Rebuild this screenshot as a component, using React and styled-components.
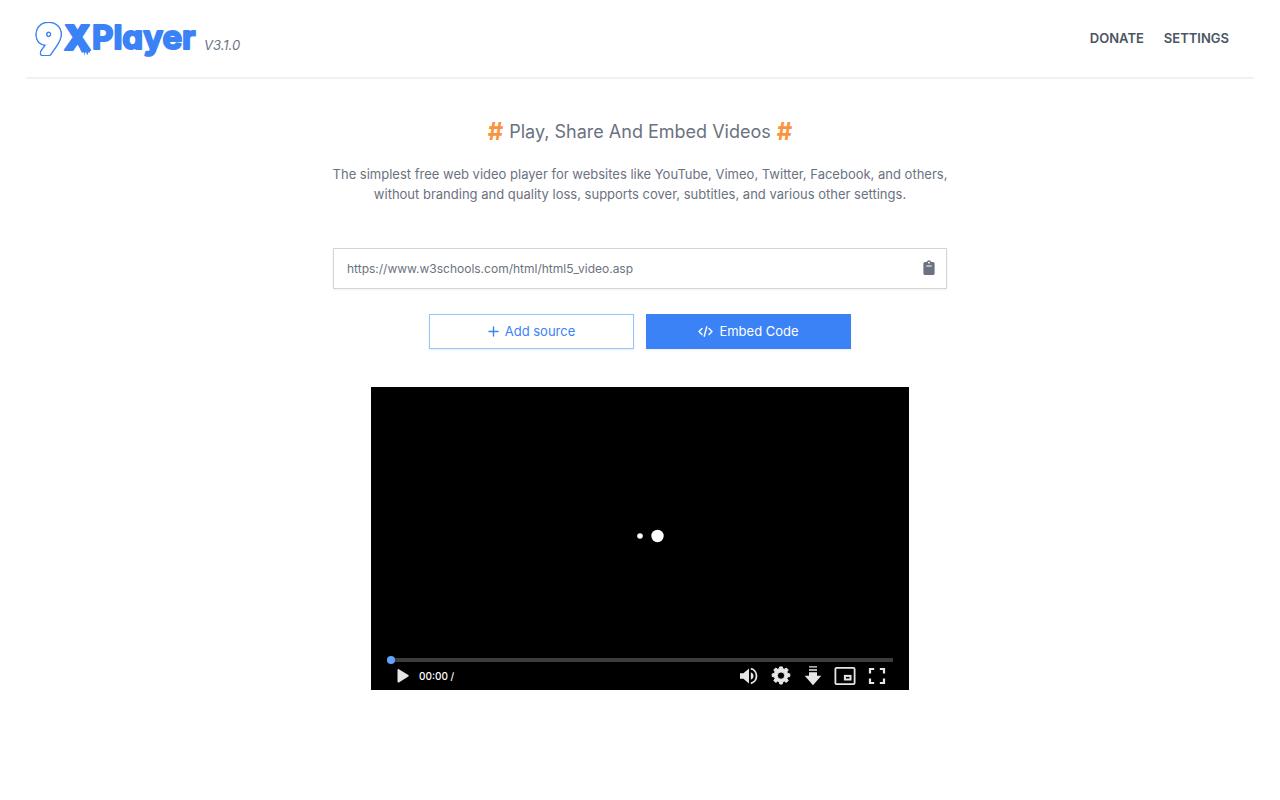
import { useState } from "react";
import styled, { createGlobalStyle } from "styled-components";

const App = () => {
  const [url, setUrl] = useState("https://www.w3schools.com/html/html5_video.asp");

  return (
    <>
      <GlobalStyle />
      <Header>
        <Brand>
          <Logo />
          <Version>V3.1.0</Version>
        </Brand>
        <Nav>
          <NavLink href="#donate">DONATE</NavLink>
          <NavLink href="#settings">SETTINGS</NavLink>
        </Nav>
      </Header>
      <Main>
        <Title>
          <Hash>#</Hash> Play, Share And Embed Videos <Hash>#</Hash>
        </Title>
        <Description>
          The simplest free web video player for websites like YouTube, Vimeo,
          Twitter, Facebook, and others,
          <br />
          without branding and quality loss, supports cover, subtitles, and
          various other settings.
        </Description>
        <UrlBox>
          <UrlInput
            type="text"
            aria-label="Video URL"
            value={url}
            onChange={(e) => setUrl(e.target.value)}
          />
          <PasteButton type="button" aria-label="Paste">
            <svg width="12" height="16" viewBox="0 0 12 16" fill="currentColor">
              <path
                fillRule="evenodd"
                d="M2 2h1.700a2.400 2.400 0 0 1 4.600 0H10a1.600 1.600 0 0 1 1.600 1.600v9.800A1.600 1.600 0 0 1 10 15H2a1.600 1.600 0 0 1-1.600-1.600V3.600A1.600 1.600 0 0 1 2 2Zm4-.2a.9.9 0 1 0 0 1.800a.9.9 0 0 0 0-1.800ZM3.300 5.400v1.200h5.400V5.400Z"
              />
            </svg>
          </PasteButton>
        </UrlBox>
        <Actions>
          <ActionButton type="button">
            <svg width="11" height="11" viewBox="0 0 11 11" {...line}>
              <path d="M5.500 1v9M1 5.500h9" />
            </svg>
            Add source
          </ActionButton>
          <ActionButton type="button" $primary>
            <svg width="15" height="11" viewBox="0 0 15 11" {...line}>
              <path d="M4 2.500 1 5.500l3 3M11 2.500l3 3-3 3M8.800.8 6.200 10.200" />
            </svg>
            Embed Code
          </ActionButton>
        </Actions>
        <Player>
          <Stage>
            <Loader width="54" height="14" viewBox="0 0 54 14" fill="#fff">
              <circle cx="27" cy="7" r="2.800" />
              <circle cx="44.500" cy="7" r="6.200" />
            </Loader>
          </Stage>
          <Seek>
            <Thumb />
          </Seek>
          <Controls>
            <IconButton type="button" aria-label="Play">
              <svg width="22" height="22" viewBox="0 0 22 22" fill="currentColor">
                <path d="M6.500 5c0-.9.7-1.200 1.400-.8l9.400 5.900c.6.4.6 1 0 1.400l-9.400 5.900c-.7.4-1.400.1-1.400-.8Z" />
              </svg>
            </IconButton>
            <Time>00:00 /</Time>
            <IconButton type="button" aria-label="Volume">
              <svg width="22" height="22" viewBox="0 0 22 22" fill="currentColor">
                <path d="M2 8.200h3.400L11 3.600v14.800L5.400 13.800H2Z" />
                <path d="M12.800 7.300c1.700.7 2.700 2.100 2.700 3.700s-1 3-2.700 3.700Z" />
                <path
                  d="M12.800 3.700c3.300.7 5.700 3.700 5.700 7.300s-2.400 6.600-5.700 7.300"
                  fill="none"
                  stroke="currentColor"
                  strokeWidth="1.800"
                />
              </svg>
            </IconButton>
            <IconButton type="button" aria-label="Player settings">
              <svg width="22" height="22" viewBox="0 0 22 22" fill="currentColor">
                <path
                  d="M9.700 1.900h2.600l.5 1.800 1.500.6 2-1.300 1.900 1.900-1.300 2 .6 1.500 2.300.5v2.600l-2.300.5-.6 1.500 1.300 2-1.900 1.900-2-1.300-1.500.6-.5 2.300H9.700l-.5-2.300-1.500-.6-2 1.300-1.900-1.900 1.300-2-.6-1.500-2.300-.5V8.900l2.300-.5.6-1.500-1.300-2L5.700 3l2 1.300 1.500-.6ZM11 6.900a3.700 3.700 0 1 0 0 7.400 3.700 3.700 0 0 0 0-7.400Z"
                  fillRule="evenodd"
                  stroke="currentColor"
                  strokeWidth="1"
                  strokeLinejoin="round"
                />
              </svg>
            </IconButton>
            <IconButton type="button" aria-label="Download">
              <svg width="22" height="22" viewBox="0 0 22 22" fill="currentColor">
                <path d="M7 1.200h8v1.300H7ZM7 4.200h8v1.500H7ZM7 7.200h8v3.600h4.300L11 20.300 2.700 10.800H7Z" />
              </svg>
            </IconButton>
            <IconButton type="button" aria-label="Picture in picture">
              <svg width="22" height="22" viewBox="0 0 22 22" fill="none" stroke="currentColor" strokeWidth="1.800">
                <rect x="1.400" y="2.900" width="19.200" height="16.200" rx="1.200" />
                <rect x="10.900" y="10.900" width="5.600" height="3.600" strokeWidth="2" />
              </svg>
            </IconButton>
            <IconButton type="button" aria-label="Fullscreen">
              <svg width="22" height="22" viewBox="0 0 22 22" fill="none" stroke="currentColor" strokeWidth="2.200">
                <path d="M4 8.500V4h4.200M13.800 4H18v4.500M18 13.500V18h-4.200M8.200 18H4v-4.500" />
              </svg>
            </IconButton>
          </Controls>
        </Player>
      </Main>
    </>
  );
};

export default App;

const line = {
  fill: "none",
  stroke: "currentColor",
  strokeWidth: 1.4,
  strokeLinecap: "round",
  strokeLinejoin: "round",
};

const Logo = () => (
  <LogoSvg width="166" height="42" viewBox="0 0 166 42" aria-label="9XPlayer">
    <LogoNine x="3" y="36">9</LogoNine>
    <LogoText x="30" y="33" $size={34} $weight={900}>X</LogoText>
    {/* paint drips under the X */}
    <path
      d="M46 32h10v3l-1 1-1-1v2l-1 1-1-3-1 1v3l-1-3-1-1-1 1-1-2Z"
      fill="#3b82f6"
    />
    <LogoText x="58" y="32" $size={33} $weight={700}>Player</LogoText>
  </LogoSvg>
);

const GlobalStyle = createGlobalStyle`
  * {
    box-sizing: border-box;
  }
  body {
    margin: 0;
    background: #fff;
    color: #6b7280;
    font-family: Inter, "Liberation Sans", sans-serif;
    font-size: 13px;
  }
  button, input {
    font: inherit;
  }
  svg {
    display: block;
  }
`;

const Header = styled.header`
  display: flex;
  justify-content: space-between;
  align-items: center;
  height: 79px;
  margin: 0 26px;
  padding: 0 25px 1px 8px;
  border-bottom: 2px solid #f0f1f3;
`;
const Brand = styled.div`
  display: flex;
  align-items: center;
  gap: 4px;
`;
const LogoSvg = styled.svg`
  overflow: visible;
`;
const LogoText = styled.text`
  font-family: Inter, sans-serif;
  font-size: ${(props) => props.$size}px;
  font-weight: ${(props) => props.$weight};
  font-feature-settings: "cv11";
  fill: #3b82f6;
  stroke: #3b82f6;
  stroke-width: 2px;
  stroke-linejoin: round;
`;
// fat white digit with a thin blue edge built from shadows
const LogoNine = styled.text`
  font-family: Inter, sans-serif;
  font-size: 38px;
  font-weight: 700;
  font-feature-settings: "cv04";
  fill: #fff;
  stroke: #fff;
  stroke-width: 4px;
  stroke-linejoin: round;
  filter: drop-shadow(1px 0 0 #3b82f6) drop-shadow(-1px 0 0 #3b82f6)
    drop-shadow(0 1px 0 #3b82f6) drop-shadow(0 -1px 0 #3b82f6);
`;
const Version = styled.span`
  padding-top: 14px;
  font-style: italic;
`;
const Nav = styled.nav`
  display: flex;
  gap: 20px;
`;
const NavLink = styled.a`
  color: #4b5563;
  font-weight: 600;
  text-decoration: none;
`;
const Main = styled.main`
  display: flex;
  flex-direction: column;
  align-items: center;
  padding: 40px 26px;
`;
const Title = styled.h1`
  display: flex;
  align-items: center;
  gap: 6px;
  margin: 0;
  font-size: 18px;
  font-weight: 400;
  line-height: 26px;
`;
const Hash = styled.span`
  color: #fb923c;
  font-size: 24px;
  font-weight: 700;
`;
const Description = styled.p`
  margin: 19px 0 44px;
  line-height: 20px;
  text-align: center;
`;
const UrlBox = styled.div`
  display: flex;
  align-items: center;
  width: 100%;
  max-width: 614px;
  height: 41px;
  padding: 0 11px 0 13px;
  border: 1px solid #d1d5db;
  box-shadow: 0 1px 2px rgba(0, 0, 0, 0.05);
`;
const UrlInput = styled.input`
  flex: 1;
  min-width: 0;
  padding: 0;
  border: 0;
  outline: 0;
  background: transparent;
  color: #6b7280;
  font-size: 12px;
`;
const PasteButton = styled.button`
  padding: 0 0 2px;
  border: 0;
  background: none;
  color: #6b7280;
`;
const Actions = styled.div`
  display: grid;
  grid-template-columns: 1fr 1fr;
  gap: 12px;
  width: 100%;
  max-width: 422px;
  margin: 25px 0 38px;
`;
const ActionButton = styled.button`
  display: flex;
  align-items: center;
  justify-content: center;
  gap: 6px;
  height: 35px;
  padding: 0 0 1px;
  border: 1px solid ${(props) => (props.$primary ? "#3b82f6" : "#93c5fd")};
  background: ${(props) => (props.$primary ? "#3b82f6" : "#fff")};
  color: ${(props) => (props.$primary ? "#fff" : "#3b82f6")};
  box-shadow: 0 1px 2px rgba(0, 0, 0, 0.08);
`;
const Player = styled.section`
  display: flex;
  flex-direction: column;
  width: 100%;
  max-width: 538px;
  aspect-ratio: 16 / 9;
  padding: 0 16px;
  background: #000;
`;
const Stage = styled.div`
  display: flex;
  flex: 1;
  align-items: center;
  justify-content: center;
  padding-top: 28px;
`;
const Loader = styled.svg`
  flex: none;
`;
const Seek = styled.div`
  display: flex;
  align-items: center;
  height: 4px;
  background: #3d3d3d;
`;
const Thumb = styled.span`
  width: 8px;
  height: 8px;
  border-radius: 50%;
  background: #60a5fa;
`;
const Controls = styled.div`
  display: flex;
  align-items: center;
  gap: 10px;
  height: 28px;
  padding: 0 5px 0 4px;
`;
const IconButton = styled.button`
  padding: 0;
  border: 0;
  background: none;
  color: #e6e6e6;
`;
const Time = styled.span`
  flex: 1;
  margin-left: -4px;
  color: #fff;
  font-size: 10px;
  font-weight: 500;
`;
